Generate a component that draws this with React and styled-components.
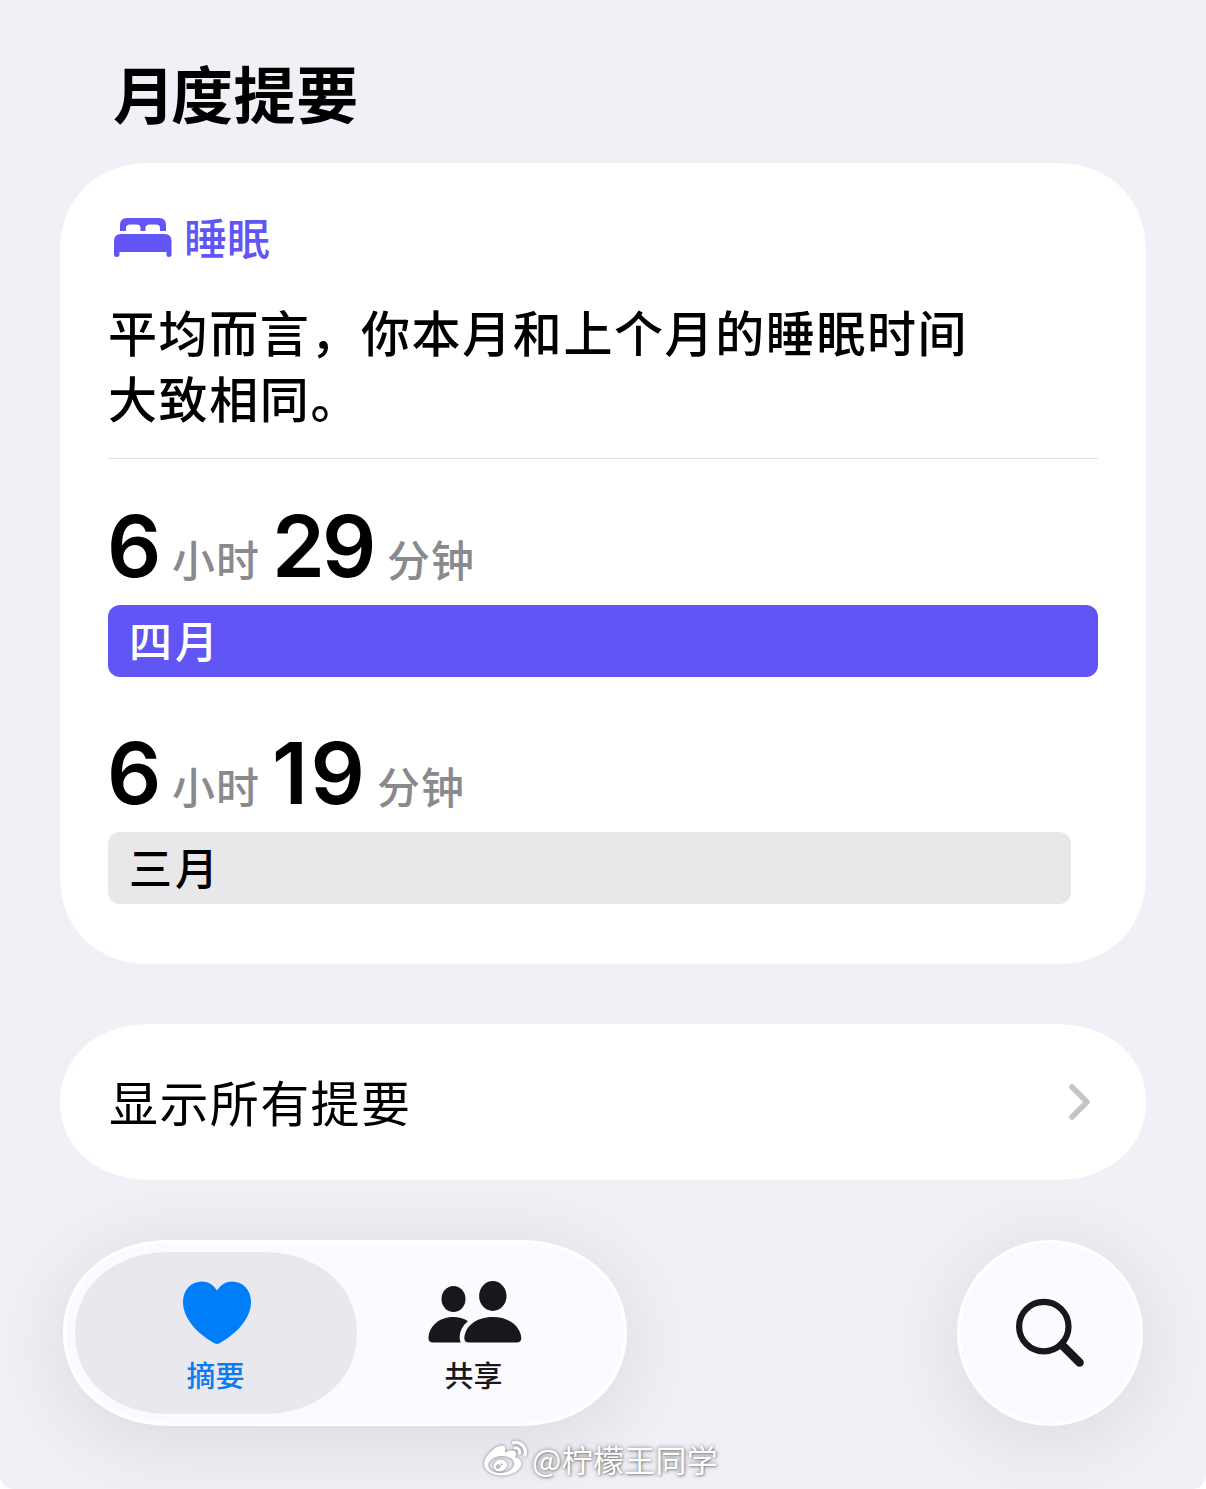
import React from "react";
import styled, { createGlobalStyle, css } from "styled-components";
import { FaWeibo } from "react-icons/fa";

const GlobalStyle = createGlobalStyle`
  * { box-sizing: border-box; }
  body {
    margin: 0;
    background: #fff;
    font-family: "Noto Sans CJK SC", sans-serif;
    color: #000;
  }
  h1, h2, p { margin: 0; font-weight: inherit; }
  button { border: 0; padding: 0; font: inherit; color: inherit; }
  svg { display: block; flex: none; }
`;

const smooth = (fallback, radius, shape) => css`
  border-radius: ${fallback}px;
  @supports (corner-shape: superellipse(1.2)) {
    border-radius: ${radius};
    corner-shape: superellipse(${shape});
  }
`;

const Screen = styled.main`
  width: 1206px;
  height: 1489px;
  padding: 51px 60px 0;
  display: flex;
  flex-direction: column;
  background: #f1f0f6;
  border-radius: 0 0 14px 14px;
  overflow: hidden;
`;

const Title = styled.h1`
  height: 112px;
  padding-left: 53px;
  font-size: 62px;
  font-weight: 700;
  line-height: 82px;
  letter-spacing: 0.6px;
  &::first-letter { letter-spacing: -4px; }
`;

const Card = styled.section`
  height: 801px;
  padding: 50px 48px 0;
  background: #fff;
  ${smooth(82, "90px", 1.12)}
`;

const Category = styled.div`
  display: flex;
  align-items: center;
  gap: 12px;
  height: 50px;
  padding-left: 6px;
  color: #6155f5;
  font-size: 43px;
  font-weight: 500;
  span { line-height: 50px; padding-bottom: 5px; }
`;

const Summary = styled.h2`
  margin-top: 35px;
  height: 161px;
  border-bottom: 1px solid #e1e1e4;
  font-size: 49px;
  font-weight: 500;
  line-height: 66px;
  letter-spacing: 1.6px;
  white-space: pre-line;
`;

const Stat = styled.div`
  margin-top: ${(p) => (p.$first ? 46 : 55)}px;
`;

const Duration = styled.div`
  display: flex;
  align-items: baseline;
  height: 100px;
  line-height: 83px;
`;

const Digits = styled.span`
  font-family: Inter, "Liberation Sans", sans-serif;
  font-size: 85px;
  font-weight: 600;
  width: ${(p) => p.$w}px;
  margin-left: -1px;
  letter-spacing: ${(p) => p.$tracking || 0}px;
  white-space: nowrap;
`;

const Unit = styled.span`
  width: ${(p) => p.$w}px;
  color: #8a8a8e;
  font-size: 43px;
  font-weight: 500;
  letter-spacing: 1px;
`;

const Bar = styled.div`
  height: 72px;
  padding-left: 21px;
  border-radius: 12px;
  font-size: 43px;
  font-weight: 500;
  line-height: 69px;
  letter-spacing: 3px;
  color: ${(p) => (p.$active ? "#fff" : "#000")};
  background: ${(p) => (p.$active ? "#6155f5" : "#e8e8ea")};
`;

const LinkRow = styled.button`
  margin-top: 60px;
  height: 156px;
  flex: none;
  padding: 0 55px 0 49px;
  display: flex;
  align-items: center;
  justify-content: space-between;
  background: #fff;
  font-size: 49px;
  letter-spacing: 1.4px;
  span { padding-bottom: 3px; }
  ${smooth(78, "90px / 78px", 1.07)}
`;

const Dock = styled.nav`
  margin: 60px 3px 0;
  display: flex;
  justify-content: space-between;
`;

const glass = css`
  background: #fbfaff;
  border: 3px solid #fff;
  box-shadow: 0 12px 90px rgba(0, 0, 0, 0.1);
`;

const Tabs = styled.div`
  width: 564px;
  height: 186px;
  padding: 9px;
  display: flex;
  ${glass}
  ${smooth(93, "107px / 93px", 1.07)}
`;

const Tab = styled.button`
  width: 282px;
  height: 162px;
  padding: 29px 0 0 2px;
  display: flex;
  flex-direction: column;
  align-items: center;
  margin-right: -24px;
  background: ${(p) => (p.$active ? "#e9e8ee" : "transparent")};
  color: ${(p) => (p.$active ? "#0a7cf0" : "#18171c")};
  ${smooth(81, "94px / 81px", 1.07)}
`;

const TabLabel = styled.span`
  margin: 7px 3px 0 0;
  font-size: 29px;
  font-weight: 500;
  line-height: 44px;
`;

const SearchButton = styled.button`
  width: 186px;
  height: 186px;
  border-radius: 50%;
  display: flex;
  align-items: center;
  justify-content: center;
  ${glass}
`;

const Watermark = styled.footer`
  margin: 9px 0 0 424px;
  height: 48px;
  display: flex;
  align-items: center;
  gap: 5px;
  color: #fff;
  font-size: 31px;
  letter-spacing: 0.3px;
  line-height: 48px;
  white-space: nowrap;
  text-shadow: 0 0 4px rgba(0, 0, 0, 0.5), 1px 1px 2px rgba(0, 0, 0, 0.25);
  svg { filter: drop-shadow(0 0 1.5px rgba(0, 0, 0, 0.5)); }
`;

const BedIcon = () => (
  <svg width="58" height="40" viewBox="0 0 58 40" fill="currentColor">
    <path d="M6 13V7Q6 0 13 0H45Q52 0 52 7V13H46V10Q46 6.500 42 6.500H35.500Q31.500 6.500 31.500 10V13H26.500V10Q26.500 6.500 22.500 6.500H16Q12 6.500 12 10V13Z" />
    <path d="M0 23Q0 16 7 16H50.500Q57.500 16 57.500 23V36.500Q57.500 39 55 39Q52.500 39 52.500 36.500V34H5.500V36.500Q5.500 39 2.750 39Q0 39 0 36.500Z" />
  </svg>
);

const HeartIcon = () => (
  <svg width="70" height="64" viewBox="0 0 70 64">
    <path fill="#007df8" d="M35 9.500C31 3.500 26 .5 20 .5C9 .5 1 9 1 21C1 38 16 53 32.500 62.300Q35 63.800 37.500 62.300C54 53 69 38 69 21C69 9 61 .5 50 .5C44 .5 39 3.500 35 9.500Z" />
  </svg>
);

const PeopleIcon = () => (
  <svg width="94" height="64" viewBox="0 0 94 64" fill="currentColor">
    <ellipse cx="25.500" cy="18" rx="12" ry="13" />
    <ellipse cx="64.800" cy="15" rx="13.700" ry="15" />
    <path d="M5 61.500Q.5 61.500 .5 57C1 45.500 11 36 25 36Q33.500 36 40 40.200C34.500 44.500 31.500 50.500 31.700 57Q31.700 59.500 32.700 61.500Z" />
    <path d="M41 61.500Q36.300 61.500 36.300 57C37 45.500 48 36 64.800 36C81.500 36 92.500 45.500 93.300 57Q93.300 61.500 88.500 61.500Z" />
  </svg>
);

const SearchIcon = () => (
  <svg width="70" height="70" viewBox="0 0 70 70" fill="none" stroke="#18171c">
    <circle cx="28.800" cy="28.600" r="24.700" strokeWidth="6.200" />
    <path d="M47 47L64.500 64.500" strokeWidth="8.500" strokeLinecap="round" />
  </svg>
);

const Chevron = () => (
  <svg width="23" height="38" viewBox="0 0 23 38" fill="none">
    <path d="M4 4L19 19L4 34" stroke="#c5c5c7" strokeWidth="5.600" strokeLinecap="round" strokeLinejoin="round" />
  </svg>
);

const BarTrack = styled.div`
  width: ${(p) => p.$w}px;
`;

const MONTHS = [
  { hours: "6", minutes: "29", minutesWidth: 115, tracking: -3, label: "四月", barWidth: 990, active: true },
  { hours: "6", minutes: "19", minutesWidth: 105, tracking: 2.5, label: "三月", barWidth: 963, active: false },
];

export default function App() {
  return (
    <>
      <GlobalStyle />
      <Screen>
        <Title>月度提要</Title>
        <Card>
          <Category>
            <BedIcon />
            <span>睡眠</span>
          </Category>
          <Summary>{"平均而言，你本月和上个月的睡眠时间\n大致相同。"}</Summary>
          {MONTHS.map((m, i) => (
            <Stat key={m.label} $first={i === 0}>
              <Duration>
                <Digits $w={65}>{m.hours}</Digits>
                <Unit $w={101}>小时</Unit>
                <Digits $w={m.minutesWidth} $tracking={m.tracking}>{m.minutes}</Digits>
                <Unit $w={90}>分钟</Unit>
              </Duration>
              <BarTrack $w={m.barWidth}>
                <Bar $active={m.active}>{m.label}</Bar>
              </BarTrack>
            </Stat>
          ))}
        </Card>
        <LinkRow>
          <span>显示所有提要</span>
          <Chevron />
        </LinkRow>
        <Dock>
          <Tabs>
            <Tab $active>
              <HeartIcon />
              <TabLabel>摘要</TabLabel>
            </Tab>
            <Tab>
              <PeopleIcon />
              <TabLabel>共享</TabLabel>
            </Tab>
          </Tabs>
          <SearchButton aria-label="搜索">
            <SearchIcon />
          </SearchButton>
        </Dock>
        <Watermark>
          <FaWeibo size={43} />
          <span>@柠檬王同学</span>
        </Watermark>
      </Screen>
    </>
  );
}
